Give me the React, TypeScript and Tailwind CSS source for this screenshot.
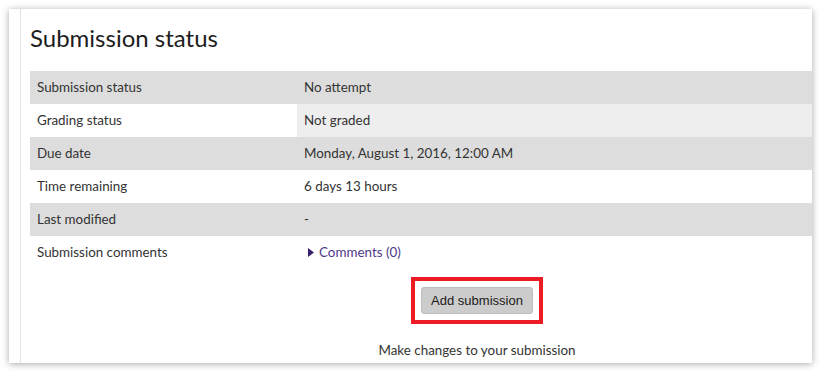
import React from 'react';

const rows = [
  { label: 'Submission status', value: 'No attempt', left: 'bg-[#dddddd]', right: 'bg-[#dddddd]' },
  { label: 'Grading status', value: 'Not graded', left: 'bg-white', right: 'bg-[#eeeeee]' },
  { label: 'Due date', value: 'Monday, August 1, 2016, 12:00 AM', left: 'bg-[#dddddd]', right: 'bg-[#dddddd]' },
  { label: 'Time remaining', value: '6 days 13 hours', left: 'bg-white', right: 'bg-white' },
  { label: 'Last modified', value: '-', left: 'bg-[#dddddd]', right: 'bg-[#dddddd]' },
];

const App = () => {
  return (
    <div className="w-[820px] h-[371px] bg-white pt-[9px] pl-[9px]" style={{ fontFamily: 'Lato, "Open Sans", sans-serif' }}>
      <div className="w-[803px] h-[354px] bg-white overflow-hidden flex shadow-[0_1px_7px_rgba(0,0,0,0.35)]">
        <div className="w-[12px] shrink-0 border-r border-[#e3e3e3]" />
        <div className="pl-[9px] shrink-0 w-[903px]">
          <h2 className="mt-[14px] mb-[18px] text-[24px] leading-[30px] text-[#1d1d1d] font-normal">Submission status</h2>

          <div className="text-[13.4px] text-[#333333]">
            {rows.map((r) => (
              <div key={r.label} className="flex h-[33px] items-center">
                <div className={`w-[267px] h-full flex items-center pl-[7px] ${r.left}`}>{r.label}</div>
                <div className={`flex-1 h-full flex items-center pl-[7px] ${r.right}`}>{r.value}</div>
              </div>
            ))}
            <div className="flex h-[33px] items-center">
              <div className="w-[267px] pl-[7px]">Submission comments</div>
              <div className="flex-1 pl-[11px] flex items-center gap-[5px] text-[#4f3a86]">
                <svg width="6" height="9" viewBox="0 0 6 9">
                  <path d="M0 0 L6 4.5 L0 9 Z" fill="#3a1f6e" />
                </svg>
                <span>Comments (0)</span>
              </div>
            </div>

            <div className="flex flex-col items-center pt-[8px]">
              <div className="border-[4px] border-[#ed1c24] p-[6px]">
                <button className="w-[112px] h-[27px] rounded-[3px] bg-[#cccccc] border border-[#bdbdbd] text-[13px] text-[#1a1a1a]" style={{ fontFamily: '"Liberation Sans", Arial, sans-serif' }}>
                  Add submission
                </button>
              </div>
              <p className="mt-[16px] leading-[20px] text-[#333333]">Make changes to your submission</p>
            </div>
          </div>
        </div>
      </div>
    </div>
  );
};

export default App;
